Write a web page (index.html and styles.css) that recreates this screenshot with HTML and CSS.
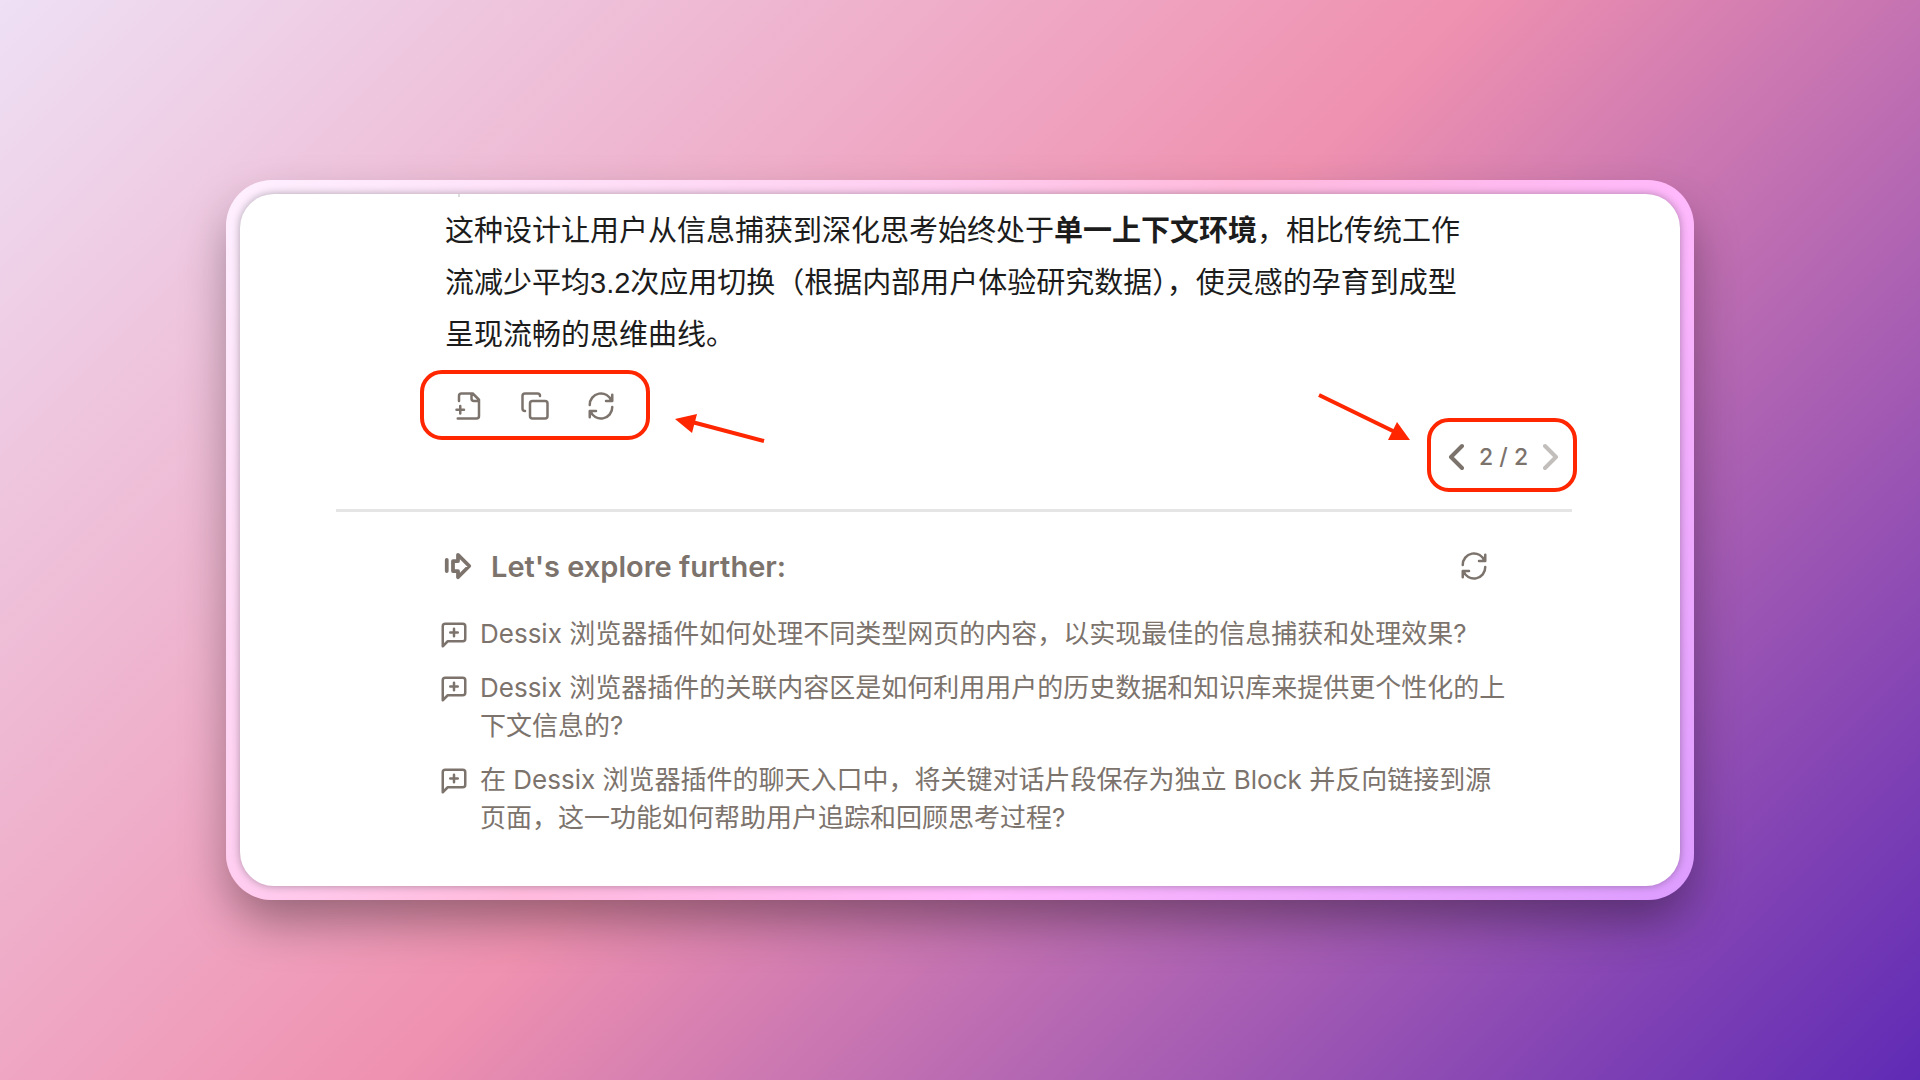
FILE: index.html
```html
<!DOCTYPE html>
<html lang="zh-CN">
<head>
    <meta charset="UTF-8">
    <meta name="viewport" content="width=device-width, initial-scale=1.0">
    <title>Dessix</title>
    <link rel="stylesheet" href="styles.css">
</head>
<body>

    <!-- Shared icons -->
    <svg class="sprite" aria-hidden="true">
        <symbol id="icon-refresh" viewBox="0 0 24 24">
            <path d="M21 3v5h-5M20.5 8A9 9 0 0 0 3 11.2M3 21v-5h5M3.500 16A9 9 0 0 0 21 12.800"/>
        </symbol>
        <symbol id="icon-message" viewBox="0 0 24 24">
            <path d="M21 15a2 2 0 0 1-2 2H7l-4 4V5a2 2 0 0 1 2-2h14a2 2 0 0 1 2 2zM12 7v6M9 10h6"/>
        </symbol>
    </svg>

    <div class="frame">
        <main class="card">
            <p class="answer">这种设计让用户从信息捕获到深化思考始终处于<strong>单一上下文环境</strong>，相比传统工作流减少平均3.2次应用切换（根据内部用户体验研究数据），使灵感的孕育到成型呈现流畅的思维曲线。</p>

            <div class="actions">
                <div class="toolbar">
                    <button type="button" aria-label="Save as block">
                        <svg class="icon" viewBox="0 0 24 24"><path d="M4 8V4a2 2 0 0 1 2-2h9l5 5v13a2 2 0 0 1-2 2H3M14 2v4a2 2 0 0 0 2 2h4M2 15h6M5 12v6"/></svg>
                    </button>
                    <button type="button" aria-label="Copy">
                        <svg class="icon" viewBox="0 0 24 24"><rect x="8" y="8" width="14" height="14" rx="2"/><path d="M4 16a2 2 0 0 1-2-2V4a2 2 0 0 1 2-2h10a2 2 0 0 1 2 2"/></svg>
                    </button>
                    <button type="button" aria-label="Regenerate">
                        <svg class="icon"><use href="#icon-refresh"/></svg>
                    </button>
                    <svg class="arrow arrow-left" viewBox="0 0 92 32"><path class="shaft" d="M16 6L88 25"/><path class="head" d="M-1 3L21 -2L16 17z"/></svg>
                </div>
                <div class="pager">
                    <svg class="arrow arrow-right" viewBox="0 0 92 48"><path class="shaft" d="M0 1L76 38"/><path class="head" d="M91 46L78 28L69 46z"/></svg>
                    <button type="button" aria-label="Previous">
                        <svg class="chevron" viewBox="0 0 16 28"><path d="M14 3L3 14l11 11"/></svg>
                    </button>
                    <span>2 / 2</span>
                    <button type="button" aria-label="Next" disabled>
                        <svg class="chevron" viewBox="0 0 16 28"><path d="M2 3l11 11L2 25"/></svg>
                    </button>
                </div>
            </div>

            <hr>

            <section class="explore">
                <div class="explore-header">
                    <svg class="icon icon-next" viewBox="0 0 24 24"><path d="M3 7v9M8 8h4V3l9 9-9 9v-5H8z"/></svg>
                    <h2>Let's explore further:</h2>
                    <button type="button" aria-label="Refresh questions">
                        <svg class="icon"><use href="#icon-refresh"/></svg>
                    </button>
                </div>
                <ul class="questions">
                    <li>
                        <svg class="icon"><use href="#icon-message"/></svg>
                        <a href="#">Dessix 浏览器插件如何处理不同类型网页的内容，以实现最佳的信息捕获和处理效果?</a>
                    </li>
                    <li>
                        <svg class="icon"><use href="#icon-message"/></svg>
                        <a href="#">Dessix 浏览器插件的关联内容区是如何利用用户的历史数据和知识库来提供更个性化的上下文信息的?</a>
                    </li>
                    <li>
                        <svg class="icon"><use href="#icon-message"/></svg>
                        <a href="#">在 Dessix 浏览器插件的聊天入口中，将关键对话片段保存为独立 Block 并反向链接到源页面，这一功能如何帮助用户追踪和回顾思考过程?</a>
                    </li>
                </ul>
            </section>
        </main>
    </div>

</body>
</html>
```
FILE: styles.css
```css
* {
    box-sizing: border-box;
}

body {
    margin: 0;
    padding: 180px 226px;
    min-height: 100vh;
    font-family: Inter, "Noto Sans CJK SC", sans-serif;
    color: #7c736d;
    background: linear-gradient(135deg, #eee0f5 0%, #ef91b0 49%, #5f2ab5 100%);
}

.sprite {
    position: absolute;
    width: 0;
    height: 0;
}

.frame {
    padding: 14px;
    border-radius: 46px;
    background: linear-gradient(135deg, #fef0ff 0%, #ffcdf0 33%, #ffbadc 46%, #ffb9fc 67%, #dc9cff 100%);
    box-shadow: 0 24px 48px -4px rgba(0, 0, 0, 0.38);
}

.card {
    position: relative;
    padding: 11px 0 49px;
    border-radius: 34px;
    background: #fff;
    box-shadow: 0 0 9px rgba(0, 0, 0, 0.32);
}

/* tail of the thread line above the answer */
.card::before {
    content: "";
    position: absolute;
    top: 0;
    left: 218px;
    width: 2px;
    height: 3px;
    background: #ddd;
}

.answer {
    margin: 0 205px;
    font-family: "Liberation Sans", "Noto Sans CJK SC", sans-serif;
    font-size: 29px;
    line-height: 52px;
    color: #1c1c1c;
}

button {
    display: flex;
    padding: 0;
    border: 0;
    background: none;
    color: inherit;
    cursor: pointer;
}

.icon {
    width: 30px;
    height: 30px;
    flex-shrink: 0;
    fill: none;
    stroke: currentColor;
    stroke-width: 2;
    stroke-linecap: round;
    stroke-linejoin: round;
}

.actions {
    display: flex;
    justify-content: space-between;
    align-items: flex-start;
    margin: 9px 103px 17px 180px;
}

.toolbar,
.pager {
    position: relative;
    display: flex;
    align-items: center;
    border: 4px solid #ff2600;
    border-radius: 22px;
}

.toolbar {
    gap: 36px;
    height: 70px;
    padding: 2px 30px 0;
}

.pager {
    justify-content: space-between;
    width: 150px;
    height: 74px;
    margin-top: 48px;
    padding: 4px 14px 0 17px;
    font-size: 23px;
    font-weight: 500;
}

.chevron {
    width: 16px;
    height: 28px;
    fill: none;
    stroke: currentColor;
    stroke-width: 4;
    stroke-linecap: round;
    stroke-linejoin: round;
}

.pager button:disabled {
    color: #c2bebc;
    cursor: default;
}

.arrow {
    position: absolute;
    overflow: visible;
}

.arrow-left {
    top: 42px;
    left: 252px;
    width: 92px;
    height: 32px;
}

.arrow-right {
    top: -28px;
    right: 162px;
    width: 92px;
    height: 48px;
}

.shaft {
    fill: none;
    stroke: #ff2600;
    stroke-width: 4;
}

.head {
    fill: #ff2600;
}

hr {
    height: 3px;
    margin: 0 108px 0 96px;
    border: 0;
    background: #e5e5e5;
}

.explore {
    padding: 33px 174px 0 200px;
}

.explore-header {
    display: flex;
    align-items: center;
    gap: 18px;
    height: 42px;
    padding: 0 17px 0 3px;
}

.explore-header h2 {
    flex: 1;
    margin: 0;
    font-size: 29px;
    font-weight: 600;
}

.icon-next {
    stroke-width: 3;
}

.questions {
    display: flex;
    flex-direction: column;
    gap: 16px;
    margin: 28px 0 0;
    padding: 0;
    list-style: none;
}

.questions li {
    display: flex;
    gap: 11px;
    font-size: 26px;
    line-height: 38px;
}

.questions .icon {
    margin: 5px 0 0 -1px;
}

.questions a {
    color: inherit;
    text-decoration: none;
}
```
